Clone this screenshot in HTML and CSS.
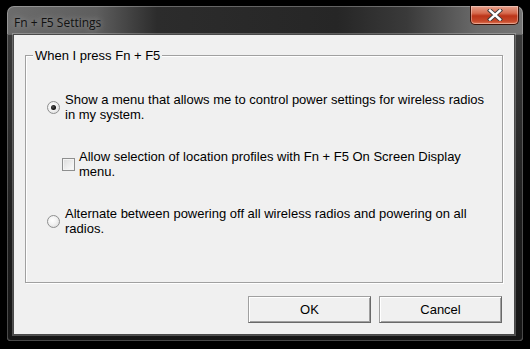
FILE: index.html
```html
<!DOCTYPE html>
<html>
<head>
<meta charset="utf-8">
<link rel="stylesheet" href="styles.css">
</head>
<body>
<div class="window">
  <div class="titlebar">
    <span class="title">Fn + F5 Settings</span>
    <div class="close">
      <svg width="18" height="12" viewBox="0 0 18 12">
        <path d="M4 1.5 L14 10.5 M14 1.5 L4 10.5" stroke="#3a3a3a" stroke-width="4.2" stroke-linecap="square" fill="none"/>
        <path d="M4 1.5 L14 10.5 M14 1.5 L4 10.5" stroke="#ffffff" stroke-width="2.4" stroke-linecap="square" fill="none"/>
      </svg>
    </div>
  </div>
  <div class="client">
    <fieldset class="group">
      <legend class="legend">When I press Fn + F5</legend>
      <div class="row row-radio">
        <span class="radio checked"></span>
        <span class="label radio-label">Show a menu that allows me to control power settings for wireless radios in my system.</span>
      </div>
      <div class="row row-check">
        <span class="check"></span>
        <span class="label check-label">Allow selection of location profiles with Fn + F5 On Screen Display menu.</span>
      </div>
      <div class="row row-radio">
        <span class="radio"></span>
        <span class="label radio-label">Alternate between powering off all wireless radios and powering on all radios.</span>
      </div>
    </fieldset>
    <div class="buttons">
      <button class="btn">OK</button>
      <button class="btn">Cancel</button>
    </div>
  </div>
</div>
</body>
</html>
```
FILE: styles.css
```css
html, body {
  margin: 0;
  padding: 0;
  background: #000;
  width: 530px;
  height: 349px;
  overflow: hidden;
}

.window {
  margin: 6px 0 0 7px;
  width: 516px;
  height: 335px;
  box-sizing: border-box;
  border-radius: 7px 7px 4px 4px;
  background:
    linear-gradient(90deg, #6c6c6c 0px, #5e5e5e 90px, #2c2c2c 150px, #262626 330px, #3a3a3a 400px, #6a6a6a 470px, #747474 516px);
  box-shadow: inset 0 0 0 1px rgba(255,255,255,0.28);
  padding: 0 7px 0 6px;
  display: flex;
  flex-direction: column;
  position: relative;
}

.window::after {
  content: "";
  position: absolute;
  left: 0; right: 0; top: 28px; bottom: 0;
  border-radius: 0 0 4px 4px;
  background: linear-gradient(180deg, #3a3a3a 0%, #1e1e1e 60%, #161616 100%);
  box-shadow: inset 0 0 0 1px rgba(255,255,255,0.22);
  z-index: 0;
}

.titlebar {
  height: 28px;
  display: flex;
  align-items: flex-start;
  position: relative;
  z-index: 1;
}

.title {
  font-family: "Open Sans", "Noto Sans", sans-serif;
  font-size: 12px;
  color: #111;
  margin: 8px 0 0 1px;
  text-shadow: 0 0 6px rgba(255,255,255,0.45);
}

.close {
  margin-left: auto;
  margin-right: -3px;
  width: 49px;
  height: 19px;
  box-sizing: border-box;
  border: 1px solid #3a1208;
  border-top: none;
  border-radius: 0 0 5px 5px;
  background: linear-gradient(180deg, #e4a08c 0%, #d66a4e 40%, #bb3418 55%, #c74a2c 85%, #e07a58 100%);
  box-shadow: inset 0 0 0 1px rgba(255,255,255,0.35);
  display: flex;
  align-items: center;
  justify-content: center;
}

.client {
  position: relative;
  z-index: 1;
  width: 502px;
  height: 301px;
  box-sizing: border-box;
  background: #f0f0f0;
  border: 1px solid #4a4a4a;
  box-shadow: 0 0 0 1px rgba(255,255,255,0.25);
  font-family: "Liberation Sans", Arial, sans-serif;
  font-size: 13px;
  line-height: 15px;
  color: #000;
  padding: 0 11px 0 11px;
  display: flex;
  flex-direction: column;
}

.group {
  margin: 13px 0 0 0;
  padding: 29px 0 0 0;
  width: 478px;
  height: 235px;
  box-sizing: border-box;
  border: 1px solid #a0a0a0;
  box-shadow: inset 1px 1px 0 #fff, 1px 1px 0 #fff;
  display: flex;
  flex-direction: column;
  gap: 27px;
}

.legend {
  margin-left: 7px;
  padding: 0 2px;
  background: #f0f0f0;
  line-height: 15px;
}

.row {
  display: flex;
  align-items: center;
}

.row-radio {
  padding-left: 21px;
}

.row-check {
  padding-left: 36px;
}

.radio {
  width: 13px;
  height: 13px;
  box-sizing: border-box;
  border-radius: 50%;
  border: 1px solid #8e8f8f;
  background: radial-gradient(circle at 40% 40%, #ffffff 0%, #f2f2f2 45%, #d4d4d4 100%);
  flex: none;
  margin-right: 5px;
  position: relative;
}

.radio.checked::after {
  content: "";
  position: absolute;
  left: 3px;
  top: 3px;
  width: 5px;
  height: 5px;
  border-radius: 50%;
  background: radial-gradient(circle at 40% 40%, #555 0%, #111 60%, #000 100%);
}

.check {
  width: 13px;
  height: 13px;
  box-sizing: border-box;
  border: 1px solid #8e8f8f;
  background: linear-gradient(135deg, #dcdcdc 0%, #f0f0f0 60%, #fbfbfb 100%);
  box-shadow: inset 0 0 0 1px #f4f4f4;
  flex: none;
  margin-right: 4px;
}

.radio-label {
  width: 428px;
}

.check-label {
  width: 414px;
}

.buttons {
  display: flex;
  justify-content: flex-end;
  gap: 8px;
  margin-top: 13px;
  padding-right: 1px;
}

.btn {
  width: 123px;
  height: 27px;
  box-sizing: border-box;
  font-family: "Liberation Sans", Arial, sans-serif;
  font-size: 13px;
  color: #000;
  background: #f0f0f0;
  border: 1px solid;
  border-color: #a0a0a0 #696969 #696969 #a0a0a0;
  box-shadow: inset 1px 1px 0 #fff, inset -1px -1px 0 #a0a0a0;
  padding: 0;
  margin: 0;
}
```
